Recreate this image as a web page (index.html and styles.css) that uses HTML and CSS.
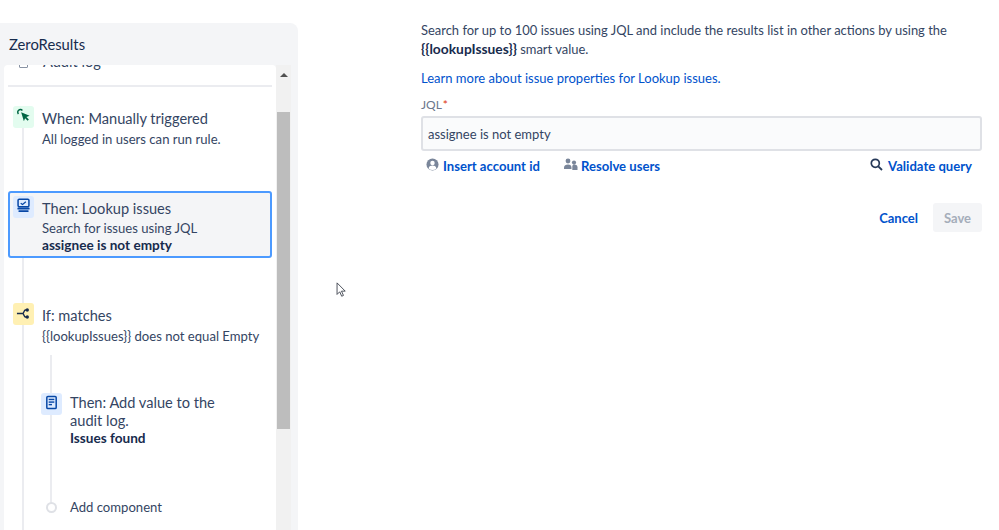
FILE: index.html
```html
<!DOCTYPE html>
<html lang="en">
<head>
<meta charset="utf-8">
<title>ZeroResults</title>
<link rel="stylesheet" href="styles.css">
</head>
<body>
<div class="page">
  <aside class="sidebar">
    <h1 class="rule-name">ZeroResults</h1>
    <div class="scroller">
      <div class="panel">
        <div class="audit-row">
          <span class="audit-icon"></span>
          <span class="title">Audit log</span>
        </div>
        <div class="divider"></div>
        <div class="tree">
          <div class="row row-when">
            <span class="icon icon-green">
              <svg viewBox="0 0 16 16" width="15" height="15"><path d="M2.600 6.400A2.800 2.800 0 0 1 6.800 2.600" fill="none" stroke="#006644" stroke-width="1.600"/><path d="M5.500 4.500l9 3.700-3.400 1.300 2.600 2.800-1.300 1.300-2.700-2.800-1.300 3.200z" fill="#006644"/></svg>
            </span>
            <div class="text">
              <div class="title">When: Manually triggered</div>
              <div class="sub sub-gap">All logged in users can run rule.</div>
            </div>
          </div>
          <div class="row row-selected">
            <span class="icon icon-blue">
              <svg viewBox="0 0 16 16" width="15" height="15"><rect x="2.200" y="1.200" width="11.600" height="8" rx="1.200" fill="none" stroke="#0747a6" stroke-width="1.600"/><path d="M5 5.500l2 1.500 3.500-3" fill="none" stroke="#0747a6" stroke-width="1.300"/><rect x="1.500" y="10.200" width="13" height="2" rx=".6" fill="#0747a6"/><rect x="2.500" y="13" width="11" height="2" rx=".8" fill="#0747a6"/></svg>
            </span>
            <div class="text">
              <div class="title">Then: Lookup issues</div>
              <div class="sub sub-tight">Search for issues using JQL</div>
              <div class="sub strong">assignee is not empty</div>
            </div>
          </div>
          <div class="row row-if">
            <span class="icon icon-yellow">
              <svg viewBox="0 0 16 16" width="15" height="15"><path d="M1 8h6M7 8c1.500 0 1.500-3.700 3-3.700h1M7 8c1.500 0 1.500 3.700 3 3.700h1" fill="none" stroke="#172b4d" stroke-width="1.500"/><circle cx="12" cy="4.300" r="1.800" fill="#172b4d"/><circle cx="12" cy="11.700" r="1.800" fill="#172b4d"/></svg>
            </span>
            <div class="text">
              <div class="title">If: matches</div>
              <div class="sub sub-gap">{{lookupIssues}} does not equal Empty</div>
            </div>
          </div>
          <div class="branch">
            <div class="row row-audit">
              <span class="icon icon-blue">
                <svg viewBox="0 0 16 16" width="15" height="15"><rect x="3" y="1.500" width="10" height="13" rx="1.200" fill="none" stroke="#0747a6" stroke-width="1.600"/><rect x="5" y="4" width="6" height="1.500" fill="#0747a6"/><rect x="5" y="6.800" width="6" height="1.500" fill="#0747a6"/><rect x="5" y="9.500" width="3.500" height="1.500" fill="#0747a6"/></svg>
              </span>
              <div class="text audit-text">
                <div class="title">Then: Add value to the audit log.</div>
                <div class="sub strong strong-pull">Issues found</div>
              </div>
            </div>
            <div class="add-row">
              <span class="add-dot"></span>
              <span class="add-label">Add component</span>
            </div>
          </div>
        </div>
      </div>
      <div class="scrollbar">
        <div class="arrow-box"><span class="arrow"></span></div>
        <div class="thumb"></div>
      </div>
    </div>
  </aside>

  <main class="detail">
    <p class="intro">Search for up to 100 issues using JQL and include the results list in other actions by using the <strong>{{lookupIssues}}</strong> smart value.</p>
    <a class="learn link" href="#">Learn more about issue properties for Lookup issues.</a>
    <label class="label">JQL<span class="star">*</span></label>
    <div class="input">assignee is not empty</div>
    <div class="tools">
      <a class="tool tool-account" href="#">
        <svg viewBox="0 0 14 14" width="13" height="13"><circle cx="7" cy="7" r="6.500" fill="#7a869a"/><circle cx="7" cy="5.300" r="2.400" fill="#fff"/><path d="M2.700 11.200c.6-2.300 2.300-3 4.300-3s3.700.7 4.300 3A6 6 0 0 1 7 13a6 6 0 0 1-4.300-1.800z" fill="#fff"/></svg>
        <span>Insert account id</span>
      </a>
      <a class="tool tool-resolve" href="#">
        <svg viewBox="0 0 15 13" width="15" height="13"><circle cx="5" cy="3" r="2.400" fill="#7a869a"/><circle cx="11" cy="4.600" r="2.100" fill="#7a869a"/><path d="M1 9.500c0-2 1.800-3 4-3s3.500 1 3.500 3V11H1z" fill="#7a869a"/><path d="M9.300 8c0-1 1-1.600 2-1.600 2 0 3.200 1 3.200 2.800V12H9.300z" fill="#7a869a"/></svg>
        <span>Resolve users</span>
      </a>
      <a class="tool tool-validate" href="#">
        <svg viewBox="0 0 13 13" width="13" height="13"><circle cx="5.300" cy="5.300" r="4" fill="none" stroke="#253858" stroke-width="1.700"/><path d="M8.300 8.300l3.700 3.700" stroke="#253858" stroke-width="1.800"/></svg>
        <span>Validate query</span>
      </a>
    </div>
    <div class="actions">
      <a class="cancel" href="#">Cancel</a>
      <button class="save" type="button">Save</button>
    </div>
  </main>
</div>
<svg class="cursor" viewBox="0 0 12 18" width="11" height="16"><path d="M1 1v13l3-3 2.200 5 2-.9L6 10.300h4.200z" fill="#fff" stroke="#3a3f4a" stroke-width="1"/></svg>
</body>
</html>
```
FILE: styles.css
```css
* { box-sizing: border-box; }
html, body { margin: 0; padding: 0; height: 100%; overflow: hidden; background: #fff; }
body {
  font-family: "Lato", "Liberation Sans", sans-serif;
  font-size: 13px;
  color: #344563;
  position: relative;
}
.page { display: flex; height: 530px; align-items: flex-start; }

.sidebar {
  width: 298px;
  height: 507px;
  margin-top: 23px;
  background: #f4f5f7;
  border-radius: 0 8px 0 0;
  display: flex;
  flex-direction: column;
  flex: none;
}
.rule-name {
  margin: 0;
  padding: 11px 0 0 9px;
  height: 42px;
  font-size: 14.800px;
  line-height: 20px;
  font-weight: 400;
  color: #172b4d;
}
.scroller { display: flex; flex: 1; min-height: 0; padding-left: 4px; width: 291px; }
.panel {
  width: 272px;
  background: #fff;
  border-radius: 4px 4px 0 0;
  overflow: hidden;
  flex: none;
}
.audit-row {
  display: flex;
  align-items: center;
  margin-top: -13px;
  height: 20px;
  padding-left: 15px;
  gap: 15px;
}
.audit-icon { width: 9px; height: 11px; border: 1px solid #8993a4; border-radius: 1px; }
.divider { height: 2px; margin: 13px 4px 0; background: #ebecf0; }

.tree { position: relative; padding-top: 19px; }
.tree::before {
  content: "";
  position: absolute;
  left: 18px;
  top: 30px;
  bottom: 0;
  width: 2px;
  background: #ebecf0;
}
.row { position: relative; display: flex; gap: 8px; }
.row-when { padding-left: 9px; height: 85px; }
.row-selected {
  margin-left: 4px;
  width: 264px;
  height: 67px;
  padding: 3px 0 0 3px;
  background: #f4f5f7;
  border: 2px solid #4c9aff;
  border-radius: 3px;
}
.row-if { margin-top: 45px; padding-left: 9px; height: 52px; }
.icon {
  flex: none;
  width: 21px;
  height: 22px;
  border-radius: 3px;
  display: flex;
  align-items: flex-start;
  justify-content: center;
  padding-top: 2px;
}
.icon-green { background: #e3fcef; }
.icon-blue { background: #deebff; }
.icon-yellow { background: #fff0b3; padding-top: 3px; }
.text { padding-top: 4px; }
.title { font-size: 14.600px; line-height: 18px; color: #344563; white-space: nowrap; }
.sub { font-size: 13.100px; line-height: 18px; color: #344563; white-space: nowrap; }
.sub-gap { margin-top: 2px; }
.sub-tight { margin-top: 1px; }
.strong { font-size: 13.600px; font-weight: 700; color: #172b4d; margin-top: -1px; }
.strong-pull { line-height: 17px; margin-top: 0; }

.branch { position: relative; padding: 38px 0 0 37px; height: 175px; }
.branch::before {
  content: "";
  position: absolute;
  left: 46px;
  top: 0;
  height: 150px;
  width: 2px;
  background: #ebecf0;
}
.row-audit { height: 100px; }
.audit-text { width: 176px; padding-top: 1px; }
.audit-text .title { white-space: normal; }
.add-row { position: relative; display: flex; align-items: center; gap: 13px; padding-left: 5px; height: 20px; margin-top: 4px; }
.add-dot { width: 11px; height: 11px; border-radius: 50%; border: 2px solid #dfe1e6; background: #fff; }
.add-label { font-size: 13.100px; color: #344563; }

.scrollbar { width: 15px; background: #f1f1f1; flex: none; position: relative; }
.arrow-box { height: 47px; padding-top: 8px; display: flex; justify-content: center; align-items: flex-start; }
.arrow { width: 0; height: 0; border-left: 4px solid transparent; border-right: 4px solid transparent; border-bottom: 4px solid #505050; }
.thumb { width: 13px; height: 317px; margin-left: 1px; background: #bdbdbd; }

.detail { width: 561px; margin-left: 123px; padding-top: 21px; flex: none; }
.intro { margin: 0; font-size: 12.950px; line-height: 19px; color: #344563; }
.intro strong { font-size: 13.800px; line-height: 1; color: #172b4d; }
.link, .tool, .cancel { color: #0052cc; text-decoration: none; }
.learn { display: block; margin-top: 10px; font-size: 13px; line-height: 19px; }
.label { display: block; margin-top: 9px; height: 19px; font-size: 12px; line-height: 16px; color: #6b778c; }
.star { color: #de350b; margin-left: 1px; }
.input {
  height: 35px;
  border: 2px solid #dfe1e6;
  border-radius: 3px;
  background: #fafbfc;
  padding: 0 5px;
  font-size: 13px;
  line-height: 33px;
  color: #344563;
}
.tools { display: flex; align-items: center; height: 20px; margin-top: 5px; padding-left: 5px; }
.tool { display: flex; align-items: center; font-size: 13.100px; font-weight: 700; line-height: 20px; }
.tool svg { flex: none; position: relative; top: -2px; }
.tool-account { gap: 4px; }
.tool-resolve { gap: 3px; margin-left: 23px; }
.tool-validate { gap: 5px; margin-left: auto; margin-right: 10px; }
.actions { display: flex; justify-content: flex-end; align-items: center; margin-top: 27px; gap: 15px; }
.cancel { font-size: 13px; font-weight: 700; }
.save {
  width: 49px;
  height: 29px;
  border: 0;
  padding: 0;
  border-radius: 3px;
  background: #f4f5f7;
  color: #a5adba;
  font: 700 13px "Lato", "Liberation Sans", sans-serif;
}
.cursor { position: absolute; left: 336px; top: 282px; }
```
